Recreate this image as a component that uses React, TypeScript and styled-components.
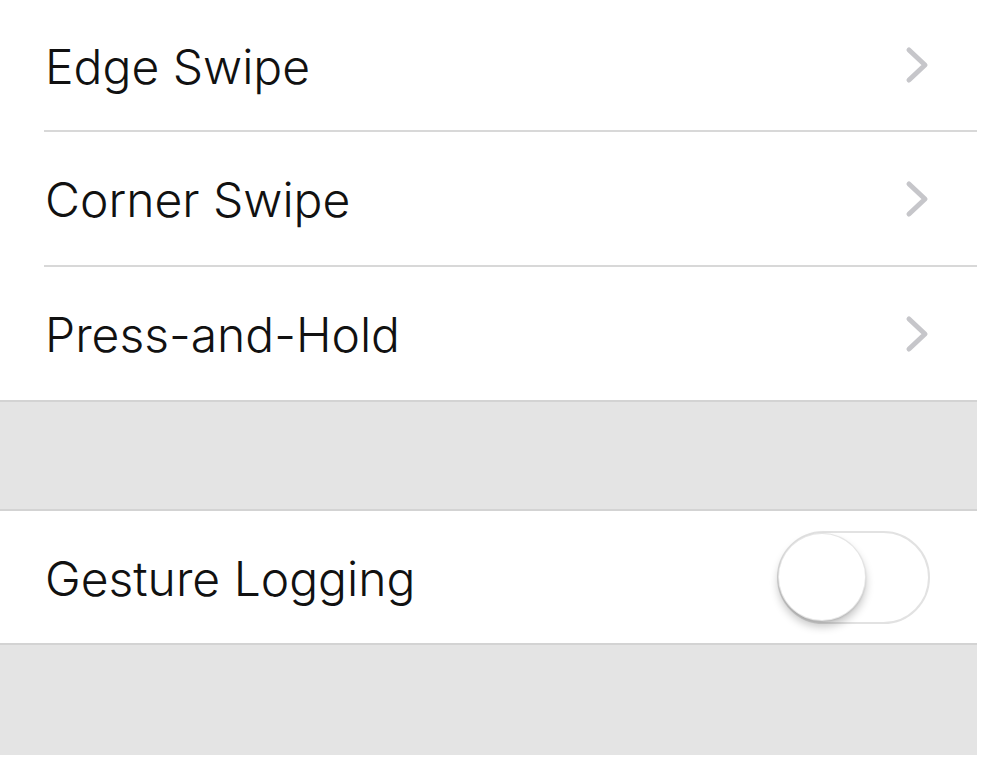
import React from "react";
import styled, { createGlobalStyle } from "styled-components";

const Global = createGlobalStyle`
  html, body { margin: 0; padding: 0; background: #ffffff; }
  body { font-family: Inter, "Liberation Sans", Arial, sans-serif; }
`;

const Page = styled.div`
  width: 977px;
  height: 757px;
  background: #ffffff;
  display: flex;
  flex-direction: column;
`;

const Group = styled.div`
  display: flex;
  flex-direction: column;
  background: #ffffff;
  padding-left: 44px;
  border-bottom: 2px solid #d3d3d3;
`;

const Row = styled.div<{ $divider?: boolean; $height: number }>`
  height: ${(p) => p.$height}px;
  display: flex;
  align-items: center;
  justify-content: space-between;
  padding-right: 46px;
  border-bottom: ${(p) => (p.$divider ? "2px solid #d8d8d8" : "none")};
  box-sizing: border-box;
`;

const Label = styled.span`
  font-family: Inter, "Liberation Sans", Arial, sans-serif;
  font-weight: 300;
  font-size: 48px;
  color: #111111;
  letter-spacing: 0px;
  margin-left: 1px;
  margin-top: 2px;
`;

const Spacer = styled.div<{ $height: number; $line?: boolean }>`
  height: ${(p) => p.$height}px;
  background: #e4e4e4;
  border-bottom: ${(p) => (p.$line ? "2px solid #d3d3d3" : "none")};
  flex-shrink: 0;
`;

const Chevron = () => (
  <svg width="26" height="38" viewBox="0 0 26 38">
    <path
      d="M4 4 L20 19 L4 34"
      fill="none"
      stroke="#c6c6ca"
      strokeWidth="5"
      strokeLinecap="round"
      strokeLinejoin="round"
    />
  </svg>
);

const Track = styled.div`
  width: 153px;
  height: 93px;
  border-radius: 47px;
  border: 2px solid #e2e2e2;
  box-sizing: border-box;
  background: #ffffff;
  position: relative;
  margin-right: 1px;
`;

const Knob = styled.div`
  position: absolute;
  left: -1px;
  top: 0px;
  width: 88px;
  height: 88px;
  border-radius: 50%;
  background: #ffffff;
  border: 1px solid rgba(0, 0, 0, 0.1);
  box-sizing: border-box;
  box-shadow: 0 6px 9px rgba(0, 0, 0, 0.22), 0 1px 2px rgba(0, 0, 0, 0.12);
`;

const Switch = () => (
  <Track>
    <Knob />
  </Track>
);

export default function App() {
  return (
    <>
      <Global />
      <Page>
        <Group>
          <Row $divider $height={132}>
            <Label>Edge Swipe</Label>
            <Chevron />
          </Row>
          <Row $divider $height={135}>
            <Label>Corner Swipe</Label>
            <Chevron />
          </Row>
          <Row $height={133}>
            <Label>Press-and-Hold</Label>
            <Chevron />
          </Row>
        </Group>
        <Spacer $height={107} $line />
        <Group>
          <Row $height={132}>
            <Label>Gesture Logging</Label>
            <Switch />
          </Row>
        </Group>
        <Spacer $height={110} />
      </Page>
    </>
  );
}
